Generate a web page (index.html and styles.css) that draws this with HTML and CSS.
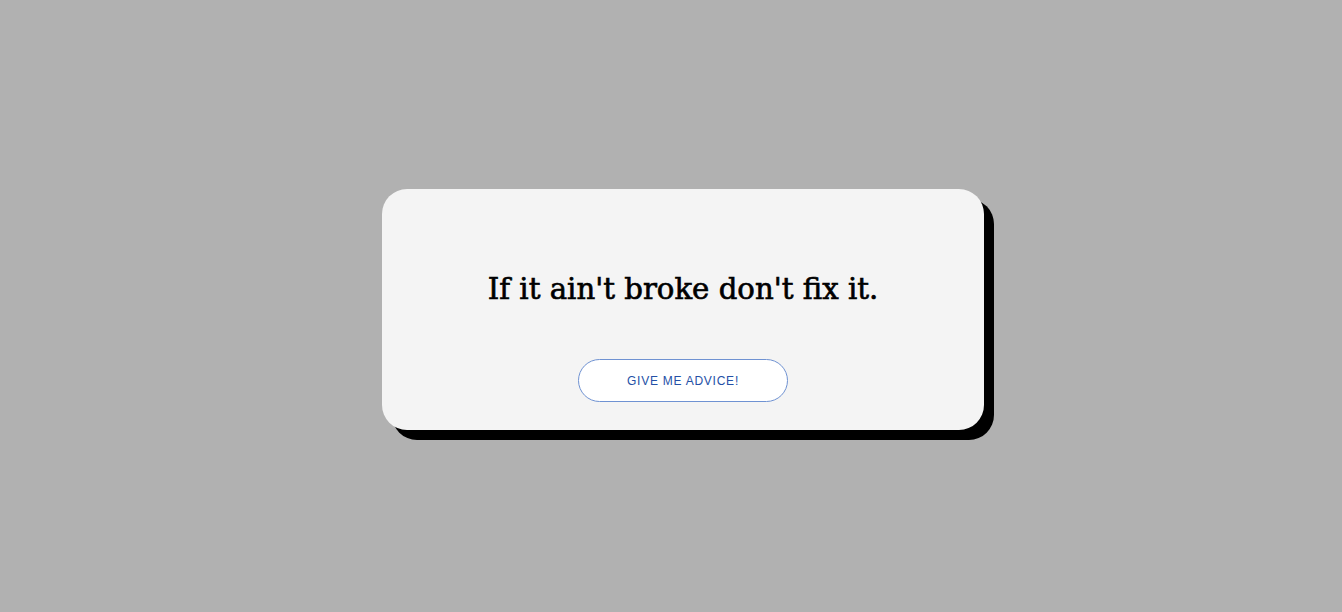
FILE: index.html
```html
<!DOCTYPE html>
<html lang="en">
<head>
<meta charset="utf-8">
<title>Advice</title>
<link rel="stylesheet" href="styles.css">
</head>
<body>
<main class="stage">
  <section class="card">
    <h1 class="quote">If it ain't broke don't fix it.</h1>
    <button class="advice-btn" type="button">GIVE ME ADVICE!</button>
  </section>
</main>
</body>
</html>
```
FILE: styles.css
```css
html, body {
  margin: 0;
  padding: 0;
  height: 100%;
}
body {
  background: #b1b1b1;
}
.stage {
  height: 100%;
  display: flex;
  align-items: center;
  justify-content: center;
}
.card {
  box-sizing: border-box;
  width: 602px;
  height: 241px;
  margin-left: 24px;
  margin-top: 7px;
  background: #f4f4f4;
  border-radius: 25px;
  box-shadow: 10px 10px 0 #000;
  display: flex;
  flex-direction: column;
  align-items: center;
  padding-top: 80px;
}
.quote {
  margin: 0;
  font-family: "DejaVu Serif", "Liberation Serif", serif;
  font-weight: 400;
  font-size: 29.2px;
  line-height: 40px;
  color: #000;
  -webkit-text-stroke: 0.65px #000;
}
.advice-btn {
  margin-top: 50px;
  width: 210px;
  height: 43px;
  background: #fff;
  border: 1px solid #6f92d2;
  border-radius: 22px;
  color: #2450a6;
  font-family: "Liberation Sans", Arial, sans-serif;
  font-size: 12px;
  letter-spacing: 0.75px;
  padding: 0;
  cursor: pointer;
}
```
